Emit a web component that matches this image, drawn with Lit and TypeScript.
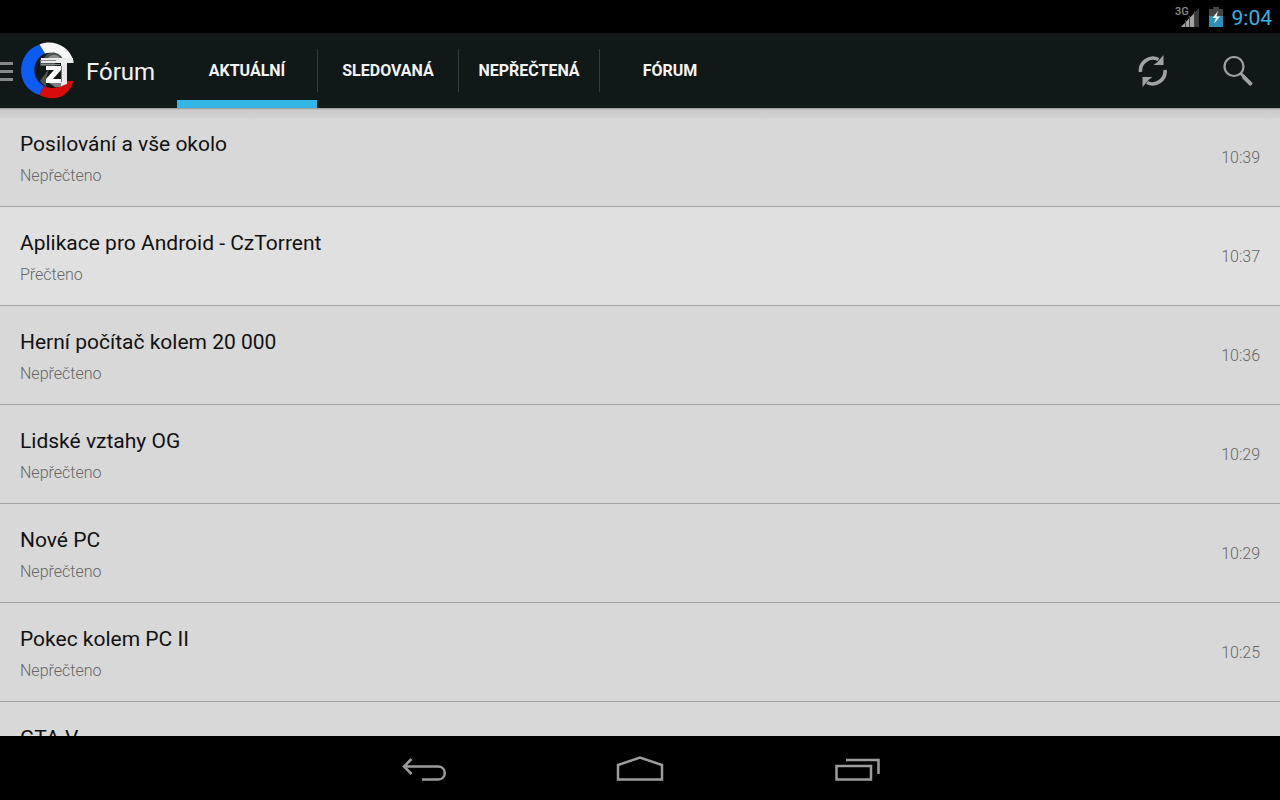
import { LitElement, html, css } from "lit";
import { customElement, state, property } from "lit/decorators.js";
import { classMap } from "lit/directives/class-map.js";

interface Topic {
  title: string;
  read: boolean;
  time: string;
}

const TOPICS: Topic[] = [
  { title: "Posilování a vše okolo", read: false, time: "10:39" },
  { title: "Aplikace pro Android - CzTorrent", read: true, time: "10:37" },
  { title: "Herní počítač kolem 20 000", read: false, time: "10:36" },
  { title: "Lidské vztahy OG", read: false, time: "10:29" },
  { title: "Nové PC", read: false, time: "10:29" },
  { title: "Pokec kolem PC II", read: false, time: "10:25" },
  { title: "GTA V", read: false, time: "10:24" },
];

const TABS = ["Aktuální", "Sledovaná", "Nepřečtená", "Fórum"];

@customElement("status-bar")
class StatusBar extends LitElement {
  static styles = css`
    :host {
      display: flex;
      align-items: center;
      justify-content: flex-end;
      height: 33px;
      padding-right: 8px;
      background: #000;
      color: #33b5e5;
      font-size: 21px;
      line-height: 34px;
    }
    .signal { margin-right: 8px; }
    .battery { margin-right: 9px; }
    .clock { padding-top: 2px; }
  `;
  render() {
    return html`
      <svg class="signal" width="26" height="24" viewBox="0 0 26 24" aria-hidden="true">
        <text x="0" y="10" font-size="11" font-weight="500" fill="#8c8c8c">3G</text>
        <path d="M6 22 L24 3V22Z" fill="#3a3a3a" />
        <path d="M6 22 L19 8.500V22Z" fill="#a4a4a4" />
        <path d="M10.500 15v7M14.500 11v11M19.500 6v16" stroke="#444" stroke-width="1" />
      </svg>
      <svg class="battery" width="14" height="22" viewBox="0 0 14 22" aria-hidden="true">
        <path d="M4 1h6v2h4v7H0V3h4z" fill="#444" />
        <path d="M0 10h14v11H0z" fill="#2b91b8" />
        <path d="M9 5 3.500 12H7L5 17.500 11 10.500H7.500z" fill="#fff" />
      </svg>
      <span class="clock">9:04</span>
    `;
  }
}

@customElement("action-bar")
class ActionBar extends LitElement {
  @state() private active = 0;

  static styles = css`
    :host {
      display: flex;
      height: 75px;
      background: #111818;
      color: #f3f3f3;
    }
    button {
      border: 0;
      margin: 0;
      padding: 0;
      background: none;
      color: inherit;
      font: inherit;
      cursor: pointer;
    }
    .home {
      display: flex;
      align-items: center;
      width: 177px;
      font-size: 24px;
      line-height: 32px;
    }
    .home svg { flex: none; margin-right: 9px; }
    .home span { padding-top: 2px; }
    .tabs { display: flex; }
    .tab {
      display: flex;
      align-items: center;
      width: 141px;
      border-bottom: 8px solid transparent;
      border-top: 8px solid transparent;
      font-size: 16px;
      font-weight: 700;
      text-transform: uppercase;
    }
    .label {
      flex: 1;
      line-height: 43px;
      border-right: 1px solid #363c3c;
    }
    .tab:last-child .label { border-color: transparent; }
    .active { background: linear-gradient(#33b5e5, #33b5e5) left bottom / 140px 8px no-repeat border-box; }
    .actions { display: flex; margin-left: auto; }
    .action {
      display: flex;
      align-items: center;
      justify-content: center;
      width: 85px;
    }
  `;

  render() {
    return html`
      <button class="home">
        <svg width="77" height="60" viewBox="0 0 77 60" aria-hidden="true">
          <path d="M0 22.500H13M0 30.500H13M0 38.500H13" stroke="#858989" stroke-width="3" />
          <path d="M39.500 3.500C16 11 14 46 39.500 54L44 45C31 38 31 19 45 12.500Z" fill="#0a5cf5" />
          <path d="M39.500 3.500C52-2 69 4 73.500 20V22H62C59 13 52 10 45 12.500Z" fill="#f7f7f7" />
          <path d="M39.500 54L44 45C52 49 60 47 67 40H73.500C68 57 54 61 39.500 54Z" fill="#d90b0b" />
          <path d="M46 14C52 9 60 12 63 18H43Z" fill="#4b4f4f" />
          <path d="M48 17C52 12 58 13 61 18Z" fill="#888c8c" />
          <path d="M40 19H55V25H50L46 38V46L40 40L48 29V25H40Z" fill="#4d5252" />
          <path d="M46 40L55 46H61L64 44V42H50Z" fill="#7b8080" />
          <path d="M41 17H73V22H67V43L61 45V22H41Z" fill="#e9e9e9" />
          <path d="M40 19.500H56M41 23.500H60" stroke="#85898a" stroke-width="1.200" />
          <path d="M46 25H61V29L53 38H61V42H46V38L54 29H46Z" fill="#fff" />
          <path d="M61.500 25V41" stroke="#777b7b" stroke-width="1" />
        </svg>
        <span>Fórum</span>
      </button>
      <div class="tabs" role="tablist">
        ${TABS.map(
          (t, i) => html`<button
            role="tab"
            aria-selected=${i === this.active}
            class=${classMap({ tab: true, active: i === this.active })}
            @click=${() => (this.active = i)}
          ><span class="label">${t}</span></button>`
        )}
      </div>
      <div class="actions">
        <button class="action" aria-label="Obnovit">
          <svg width="32" height="32" viewBox="0 0 32 32">
            <path d="M3.500 17A12.500 12.500 0 0 1 21.500 4.500M28 15A12.500 12.500 0 0 1 10 27.500" fill="none" stroke="#a0a3a3" stroke-width="3.600" />
            <path d="M26.500 0V10H16.500L20 7.500Z" fill="#a0a3a3" />
            <path d="M5.500 32V22H15.500L12 24.500Z" fill="#a0a3a3" />
          </svg>
        </button>
        <button class="action" aria-label="Hledat">
          <svg width="32" height="32" viewBox="0 0 32 32">
            <circle cx="12" cy="11.500" r="9.500" fill="none" stroke="#a0a3a3" stroke-width="2.200" />
            <path d="M18.500 18L23 23" stroke="#a0a3a3" stroke-width="2.800" />
            <path d="M22.500 20L30 27.500Q31 28.500 30 29.500L29 30.500Q28 31 27 30L20 23Z" fill="#a0a3a3" />
          </svg>
        </button>
      </div>
    `;
  }
}

@customElement("topic-row")
class TopicRow extends LitElement {
  @property({ attribute: false }) topic!: Topic;

  static styles = css`
    :host { display: block; }
    .row {
      display: flex;
      align-items: center;
      justify-content: space-between;
      height: 98px;
      padding: 0 20px;
      border-bottom: 1px solid #a3a3a3;
      background: #d8d8d8;
      color: #111;
      text-decoration: none;
    }
    .read { background: #e0e0e0; }
    .text { padding-top: 6px; }
    .title { font-size: 21px; line-height: 32px; }
    .status, .time { font-size: 16px; line-height: 32px; font-weight: 300; color: #666; }
    .time { padding-top: 2px; }
  `;

  render() {
    const { title, read, time } = this.topic;
    return html`
      <a href="#" class=${classMap({ row: true, read })}>
        <div class="text">
          <div class="title">${title}</div>
          <div class="status">${read ? "Přečteno" : "Nepřečteno"}</div>
        </div>
        <time class="time">${time}</time>
      </a>
    `;
  }
}

@customElement("nav-bar")
class NavBar extends LitElement {
  static styles = css`
    :host {
      display: flex;
      justify-content: center;
      height: 64px;
      background: #000;
    }
    button {
      display: flex;
      align-items: center;
      justify-content: center;
      width: 216px;
      padding: 2px 0 0;
      border: 0;
      background: none;
      cursor: pointer;
    }
    svg { fill: none; stroke: #9c9c9c; stroke-width: 2.5; }
  `;
  render() {
    return html`
      <button aria-label="Zpět">
        <svg width="48" height="32" viewBox="0 0 48 32">
          <path d="M3.500 13.500H38C47 13.500 47 26.500 38 26.500H22M11.500 6L4 13.500L11.500 21" />
        </svg>
      </button>
      <button aria-label="Domů">
        <svg width="48" height="32" viewBox="0 0 48 32">
          <path d="M2 26.500V12L24 4.500L46 12V26.500Z" />
        </svg>
      </button>
      <button aria-label="Poslední aplikace">
        <svg width="48" height="32" viewBox="0 0 48 32">
          <path d="M4.500 13H39V26.500H4.500ZM14 7H46.500V21" />
        </svg>
      </button>
    `;
  }
}

@customElement("app-root")
class AppRoot extends LitElement {
  static styles = css`
    :host {
      display: flex;
      flex-direction: column;
      height: 100vh;
      overflow: hidden;
      background: #d8d8d8;
      font-family: Roboto, "Noto Sans", sans-serif;
    }
    status-bar, action-bar, nav-bar { flex: none; }
    .list {
      position: relative;
      flex: 1;
      min-height: 0;
      overflow: hidden;
    }
    .list::before {
      content: "";
      position: absolute;
      inset: 0 0 auto;
      height: 10px;
      background: linear-gradient(rgba(0, 0, 0, 0.3), rgba(0, 0, 0, 0.06) 2px, rgba(0, 0, 0, 0.03));
      pointer-events: none;
    }
  `;
  render() {
    return html`
      <status-bar></status-bar>
      <action-bar></action-bar>
      <main class="list">
        ${TOPICS.map((topic) => html`<topic-row .topic=${topic}></topic-row>`)}
      </main>
      <nav-bar></nav-bar>
    `;
  }
}
